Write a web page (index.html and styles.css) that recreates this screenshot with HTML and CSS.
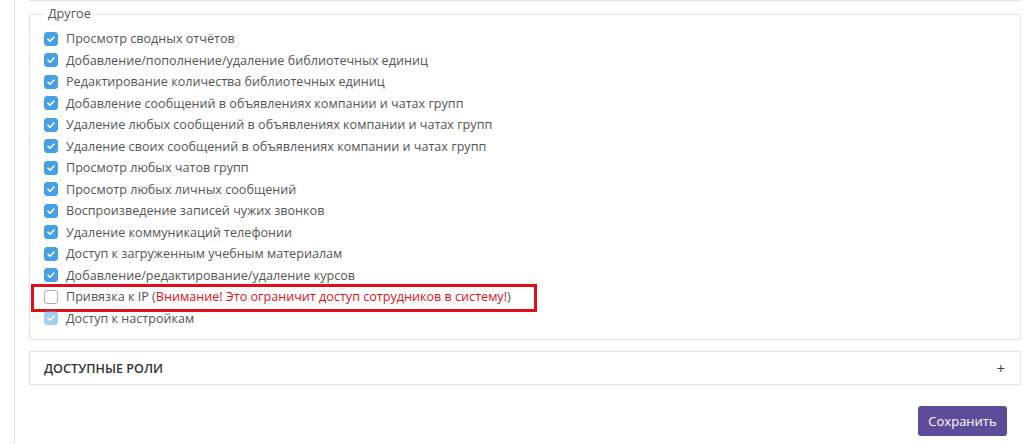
FILE: index.html
```html
<!DOCTYPE html>
<html lang="ru">
<head>
    <meta charset="UTF-8">
    <title>Права доступа</title>
    <link rel="stylesheet" href="styles.css">
</head>
<body>

    <div class="settings-panel">
        <div class="prev-group"></div>

        <!-- Other permissions -->
        <fieldset class="perm-group">
            <legend>Другое</legend>
            <label class="perm-row"><span class="check checked"></span>Просмотр сводных отчётов</label>
            <label class="perm-row"><span class="check checked"></span>Добавление/пополнение/удаление библиотечных единиц</label>
            <label class="perm-row"><span class="check checked"></span>Редактирование количества библиотечных единиц</label>
            <label class="perm-row"><span class="check checked"></span>Добавление сообщений в объявлениях компании и чатах групп</label>
            <label class="perm-row"><span class="check checked"></span>Удаление любых сообщений в объявлениях компании и чатах групп</label>
            <label class="perm-row"><span class="check checked"></span>Удаление своих сообщений в объявлениях компании и чатах групп</label>
            <label class="perm-row"><span class="check checked"></span>Просмотр любых чатов групп</label>
            <label class="perm-row"><span class="check checked"></span>Просмотр любых личных сообщений</label>
            <label class="perm-row"><span class="check checked"></span>Воспроизведение записей чужих звонков</label>
            <label class="perm-row"><span class="check checked"></span>Удаление коммуникаций телефонии</label>
            <label class="perm-row"><span class="check checked"></span>Доступ к загруженным учебным материалам</label>
            <label class="perm-row"><span class="check checked"></span>Добавление/редактирование/удаление курсов</label>
            <label class="perm-row marked">
                <span class="check"></span>Привязка к IP (<span class="warning">Внимание! Это ограничит доступ сотрудников в систему!</span>)
                <span class="highlight"></span>
            </label>
            <label class="perm-row"><span class="check checked disabled"></span>Доступ к настройкам</label>
        </fieldset>

        <!-- Roles accordion -->
        <div class="accordion">
            <span class="accordion-title">Доступные роли</span>
            <span class="accordion-toggle">+</span>
        </div>

        <div class="form-actions">
            <button type="submit">Сохранить</button>
        </div>
    </div>

</body>
</html>
```

FILE: styles.css
```css
body {
    font-family: "Open Sans", "Noto Sans", sans-serif;
    font-size: 13px;
    color: #555;
    background-color: #fff;
    margin: 0;
    padding: 0;
}

.settings-panel {
    margin-left: 14px;
    border-left: 1px solid #e3e3e3;
    padding: 0 9px 0 14px;
    height: 444px;
    box-sizing: border-box;
}

.prev-group {
    border-bottom: 1px solid #e3e3e3;
}

.perm-group {
    margin: 4px 0 0 0;
    padding: 5px 14px 10px 14px;
    border: 1px solid #e3e3e3;
}

.perm-group legend {
    padding: 0 4px;
    line-height: 18px;
    font-size: 12.6px;
    color: #555;
}

.perm-row {
    display: flex;
    align-items: center;
    height: 21.5px;
    position: relative;
    font-size: 12.6px;
    color: #555;
}

.check {
    width: 14px;
    height: 14px;
    margin-right: 8px;
    border: 1px solid #aaa;
    border-radius: 3px;
    box-sizing: border-box;
    background-color: #fff;
    flex-shrink: 0;
}

.check.checked {
    border-color: #45a0e6;
    background-color: #45a0e6;
    background-image: url("data:image/svg+xml,%3Csvg xmlns='http://www.w3.org/2000/svg' viewBox='0 0 14 14'%3E%3Cpath d='M4 7.2l2 2 4-4.2' fill='none' stroke='%23fff' stroke-width='1.6' stroke-linecap='round' stroke-linejoin='round'/%3E%3C/svg%3E");
    background-size: 14px 14px;
    background-position: center;
}

.check.disabled {
    opacity: 0.5;
}

.warning {
    color: #e0121b;
}

.highlight {
    position: absolute;
    left: -13px;
    top: -2px;
    width: 506px;
    height: 28px;
    border: 3px solid #e0101a;
    box-sizing: border-box;
}

.accordion {
    margin-top: 11px;
    height: 32px;
    border: 1px solid #e3e3e3;
    display: flex;
    align-items: center;
    justify-content: space-between;
    padding: 0 14px;
}

.accordion-title {
    text-transform: uppercase;
    font-weight: 600;
    font-size: 12.6px;
    color: #333;
}

.accordion-toggle {
    font-size: 15px;
    color: #444;
    margin-right: 1px;
}

.form-actions {
    display: flex;
    justify-content: flex-end;
    margin-top: 21px;
    padding-right: 14px;
}

.form-actions button {
    width: 89px;
    height: 30px;
    background-color: #5e4c9b;
    color: #fff;
    border: none;
    border-radius: 3px;
    font-family: "Open Sans", "Noto Sans", sans-serif;
    font-size: 13px;
    cursor: pointer;
}
```
